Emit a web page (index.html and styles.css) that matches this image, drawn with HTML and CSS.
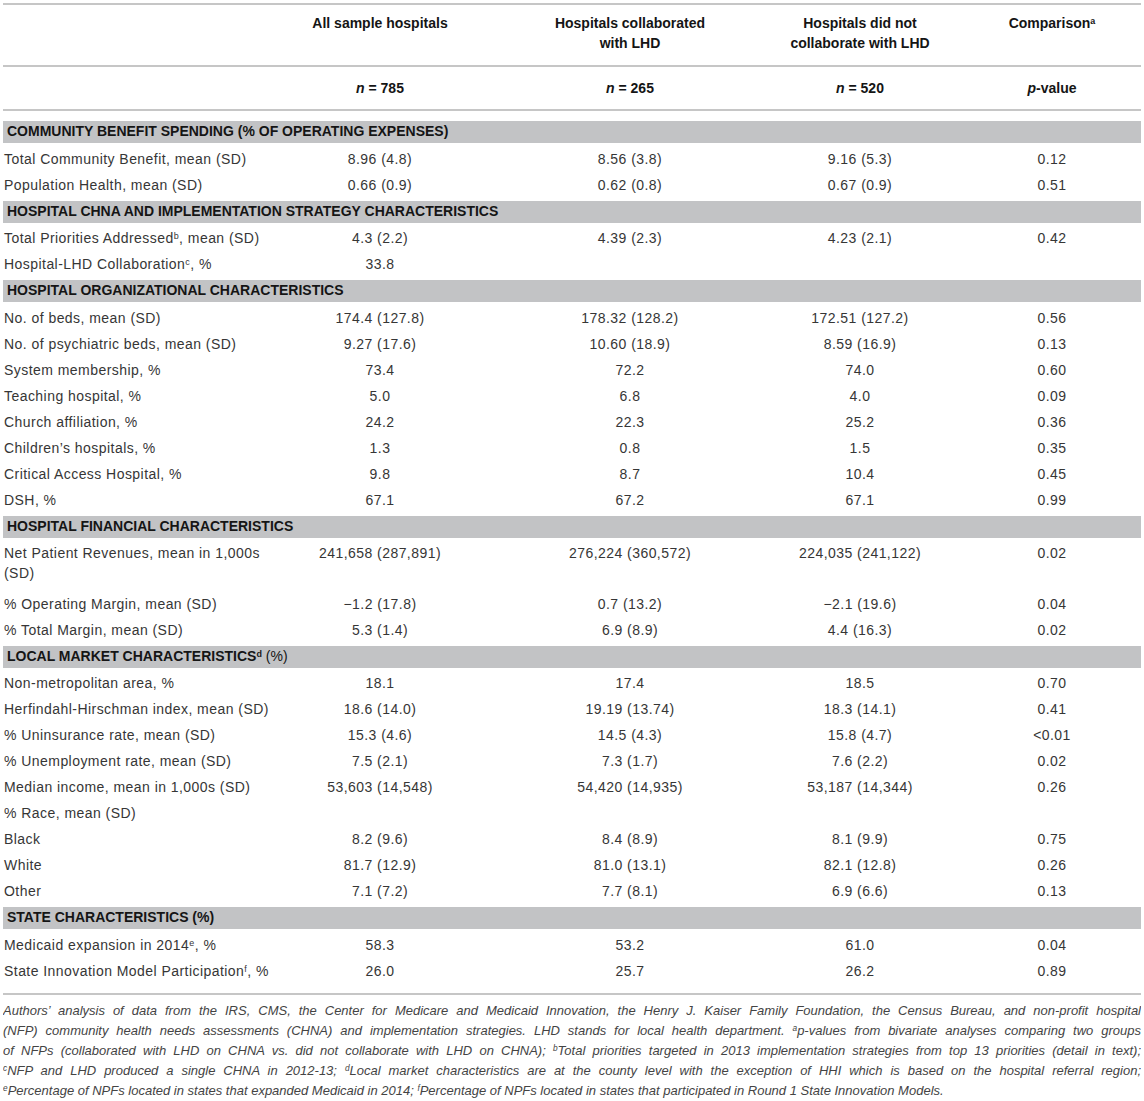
FILE: index.html
```html
<!DOCTYPE html>
<html>
<head>
<meta charset="utf-8">
<link rel="stylesheet" href="styles.css">
</head>
<body>
<table class="t">
<colgroup><col class="c0"><col class="c1"><col class="c2"><col class="c3"><col class="c4"></colgroup>
<thead>
<tr class="h1"><th></th><th>All sample hospitals</th><th>Hospitals collaborated<br>with LHD</th><th>Hospitals did not<br>collaborate with LHD</th><th>Comparison<sup>a</sup></th></tr>
<tr class="h2"><th></th><th><i>n</i> = 785</th><th><i>n</i> = 265</th><th><i>n</i> = 520</th><th><i>p</i>-value</th></tr>
</thead>
<tbody>
<tr class="sec first"><td colspan="5"><div class="band">COMMUNITY BENEFIT SPENDING (% OF OPERATING EXPENSES)</div></td></tr>
<tr><td>Total Community Benefit, mean (SD)</td><td>8.96 (4.8)</td><td>8.56 (3.8)</td><td>9.16 (5.3)</td><td>0.12</td></tr>
<tr><td>Population Health, mean (SD)</td><td>0.66 (0.9)</td><td>0.62 (0.8)</td><td>0.67 (0.9)</td><td>0.51</td></tr>
<tr class="sec"><td colspan="5"><div class="band">HOSPITAL CHNA AND IMPLEMENTATION STRATEGY CHARACTERISTICS</div></td></tr>
<tr><td>Total Priorities Addressed<sup>b</sup>, mean (SD)</td><td>4.3 (2.2)</td><td>4.39 (2.3)</td><td>4.23 (2.1)</td><td>0.42</td></tr>
<tr><td>Hospital-LHD Collaboration<sup>c</sup>, %</td><td>33.8</td><td></td><td></td><td></td></tr>
<tr class="sec"><td colspan="5"><div class="band">HOSPITAL ORGANIZATIONAL CHARACTERISTICS</div></td></tr>
<tr><td>No. of beds, mean (SD)</td><td>174.4 (127.8)</td><td>178.32 (128.2)</td><td>172.51 (127.2)</td><td>0.56</td></tr>
<tr><td>No. of psychiatric beds, mean (SD)</td><td>9.27 (17.6)</td><td>10.60 (18.9)</td><td>8.59 (16.9)</td><td>0.13</td></tr>
<tr><td>System membership, %</td><td>73.4</td><td>72.2</td><td>74.0</td><td>0.60</td></tr>
<tr><td>Teaching hospital, %</td><td>5.0</td><td>6.8</td><td>4.0</td><td>0.09</td></tr>
<tr><td>Church affiliation, %</td><td>24.2</td><td>22.3</td><td>25.2</td><td>0.36</td></tr>
<tr><td>Children’s hospitals, %</td><td>1.3</td><td>0.8</td><td>1.5</td><td>0.35</td></tr>
<tr><td>Critical Access Hospital, %</td><td>9.8</td><td>8.7</td><td>10.4</td><td>0.45</td></tr>
<tr><td>DSH, %</td><td>67.1</td><td>67.2</td><td>67.1</td><td>0.99</td></tr>
<tr class="sec"><td colspan="5"><div class="band">HOSPITAL FINANCIAL CHARACTERISTICS</div></td></tr>
<tr class="two"><td>Net Patient Revenues, mean in 1,000s (SD)</td><td>241,658 (287,891)</td><td>276,224 (360,572)</td><td>224,035 (241,122)</td><td>0.02</td></tr>
<tr><td>% Operating Margin, mean (SD)</td><td>−1.2 (17.8)</td><td>0.7 (13.2)</td><td>−2.1 (19.6)</td><td>0.04</td></tr>
<tr><td>% Total Margin, mean (SD)</td><td>5.3 (1.4)</td><td>6.9 (8.9)</td><td>4.4 (16.3)</td><td>0.02</td></tr>
<tr class="sec"><td colspan="5"><div class="band">LOCAL MARKET CHARACTERISTICS<sup>d</sup> <span class="reg">(%)</span></div></td></tr>
<tr><td>Non-metropolitan area, %</td><td>18.1</td><td>17.4</td><td>18.5</td><td>0.70</td></tr>
<tr><td>Herfindahl-Hirschman index, mean (SD)</td><td>18.6 (14.0)</td><td>19.19 (13.74)</td><td>18.3 (14.1)</td><td>0.41</td></tr>
<tr><td>% Uninsurance rate, mean (SD)</td><td>15.3 (4.6)</td><td>14.5 (4.3)</td><td>15.8 (4.7)</td><td>&lt;0.01</td></tr>
<tr><td>% Unemployment rate, mean (SD)</td><td>7.5 (2.1)</td><td>7.3 (1.7)</td><td>7.6 (2.2)</td><td>0.02</td></tr>
<tr><td>Median income, mean in 1,000s (SD)</td><td>53,603 (14,548)</td><td>54,420 (14,935)</td><td>53,187 (14,344)</td><td>0.26</td></tr>
<tr><td>% Race, mean (SD)</td><td></td><td></td><td></td><td></td></tr>
<tr><td>Black</td><td>8.2 (9.6)</td><td>8.4 (8.9)</td><td>8.1 (9.9)</td><td>0.75</td></tr>
<tr><td>White</td><td>81.7 (12.9)</td><td>81.0 (13.1)</td><td>82.1 (12.8)</td><td>0.26</td></tr>
<tr><td>Other</td><td>7.1 (7.2)</td><td>7.7 (8.1)</td><td>6.9 (6.6)</td><td>0.13</td></tr>
<tr class="sec"><td colspan="5"><div class="band">STATE CHARACTERISTICS (%)</div></td></tr>
<tr><td>Medicaid expansion in 2014<sup>e</sup>, %</td><td>58.3</td><td>53.2</td><td>61.0</td><td>0.04</td></tr>
<tr class="last"><td>State Innovation Model Participation<sup>f</sup>, %</td><td>26.0</td><td>25.7</td><td>26.2</td><td>0.89</td></tr>
</tbody>
</table>
<div class="notes">
<span class="ln">Authors’ analysis of data from the IRS, CMS, the Center for Medicare and Medicaid Innovation, the Henry J. Kaiser Family Foundation, the Census Bureau, and non-profit hospital</span>
<span class="ln">(NFP) community health needs assessments (CHNA) and implementation strategies. LHD stands for local health department. <sup>a</sup>p-values from bivariate analyses comparing two groups</span>
<span class="ln">of NFPs (collaborated with LHD on CHNA vs. did not collaborate with LHD on CHNA); <sup>b</sup>Total priorities targeted in 2013 implementation strategies from top 13 priorities (detail in text);</span>
<span class="ln"><sup>c</sup>NFP and LHD produced a single CHNA in 2012-13; <sup>d</sup>Local market characteristics are at the county level with the exception of HHI which is based on the hospital referral region;</span>
<span class="ln end"><sup>e</sup>Percentage of NPFs located in states that expanded Medicaid in 2014; <sup>f</sup>Percentage of NPFs located in states that participated in Round 1 State Innovation Models.</span>
</div>
</body>
</html>
```
FILE: styles.css
```css
body {
  margin: 3px;
  background: #ffffff;
  font-family: "Liberation Sans", Arial, Helvetica, sans-serif;
  font-size: 14px;
  color: #333333;
}

.t {
  width: 1138px;
  table-layout: fixed;
  border-collapse: separate;
  border-spacing: 0;
}

.c0 { width: 268px; }
.c1 { width: 218px; }
.c2 { width: 282px; }
.c3 { width: 178px; }
.c4 { width: 192px; }

th {
  font-weight: bold;
  color: #151515;
  text-align: center;
  line-height: 20px;
  padding: 0;
}

.h1 th {
  border-top: 2px solid #c6c6c6;
  border-bottom: 2px solid #c6c6c6;
  vertical-align: top;
  padding: 8px 0 12px;
}

.h2 th {
  border-bottom: 2px solid #c6c6c6;
  padding: 11px 0;
}

.h1 th:last-child,
.h2 th:last-child {
  padding-left: 14px;
}

td {
  padding: 3px 0;
  line-height: 20px;
  text-align: center;
  vertical-align: top;
  letter-spacing: 0.45px;
  color: #363636;
}

td:first-child {
  text-align: left;
  padding-left: 1px;
}

td:last-child {
  padding-left: 14px;
}

.two td {
  padding-bottom: 7.5px;
}

.sec td {
  padding: 2.75px 0;
  letter-spacing: 0;
}

.sec td:last-child {
  padding-left: 0;
}

.sec.first td {
  padding-top: 10px;
}

.band {
  background: #c2c3c5;
  height: 22px;
  line-height: 21px;
  padding-left: 4px;
  font-weight: bold;
  color: #151515;
}

.reg {
  font-weight: normal;
}

.last td {
  padding-bottom: 12.5px;
  border-bottom: 2px solid #c6c6c6;
}

sup {
  font-size: 0.64em;
  line-height: 0;
  vertical-align: 0.5em;
}

.notes {
  margin-top: 6px;
  font-style: italic;
  font-size: 13px;
  line-height: 20px;
  color: #444444;
}

.ln {
  display: block;
  text-align: justify;
  text-align-last: justify;
}

.ln.end {
  text-align-last: left;
}
```
